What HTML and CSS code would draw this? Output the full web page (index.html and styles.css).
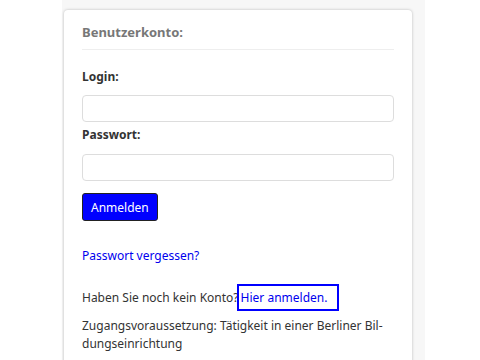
FILE: index.html
```html
<!DOCTYPE html>
<html lang="de">
<head>
    <meta charset="UTF-8">
    <title>Benutzerkonto</title>
    <link rel="stylesheet" href="styles.css">
</head>
<body>

<div class="page">
    <div class="card">
        <h2>Benutzerkonto:</h2>

        <form class="login">
            <label for="login">Login:</label>
            <input type="text" id="login">

            <label for="passwort" class="second">Passwort:</label>
            <input type="password" id="passwort">

            <button type="button">Anmelden</button>
        </form>

        <p class="forgot"><a href="#">Passwort vergessen?</a></p>

        <p class="register">Haben Sie noch kein Konto?<a href="#" class="focused">Hier anmelden.</a></p>

        <p class="note">Zugangsvoraussetzung: Tätigkeit in einer Berliner Bil&shy;dungseinrichtung</p>
    </div>
</div>

</body>
</html>
```

FILE: styles.css
```css
html, body {
    margin: 0;
    padding: 0;
    background: white;
}
body {
    font-family: "Noto Sans", "Open Sans", sans-serif;
    font-size: 12px;
    color: #333;
}
.page {
    background: #f7f7f7;
    margin-left: 62px;
    width: 363px;
    padding-top: 10px;
    min-height: 400px;
}
.card {
    background: white;
    width: 312px;
    margin-left: 2px;
    padding: 0 18px 20px 18px;
    border-radius: 4px;
    box-shadow: 0 0 3px rgba(0,0,0,0.25);
    hyphens: manual;
}
h2 {
    margin: 0;
    padding: 13px 0 8px 0;
    font-size: 13px;
    line-height: 18px;
    color: #777;
    border-bottom: 1px solid #eee;
}
.login {
    display: flex;
    flex-direction: column;
    align-items: flex-start;
    padding-top: 18px;
}
label {
    font-weight: bold;
    line-height: 17px;
}
input {
    box-sizing: border-box;
    width: 100%;
    height: 27px;
    margin: 10px 0 4px 0;
    border: 1px solid #ddd;
    border-radius: 4px;
}
label.second + input {
    margin: 11px 0 12px 0;
}
button {
    height: 28px;
    padding: 0 8px;
    background: #0000ff;
    color: white;
    font-family: inherit;
    font-size: 12px;
    border: 1px solid #222;
    border-radius: 3px;
}
a { color: #0000ee; text-decoration: none; }
p { margin: 0; line-height: 18px; }
.forgot { margin-top: 26px; }
.register { margin-top: 24px; }
.focused {
    outline: 2px solid #0000ff;
    padding: 3px 10px 3px 2px;
}
.note { margin-top: 10px; }
```
